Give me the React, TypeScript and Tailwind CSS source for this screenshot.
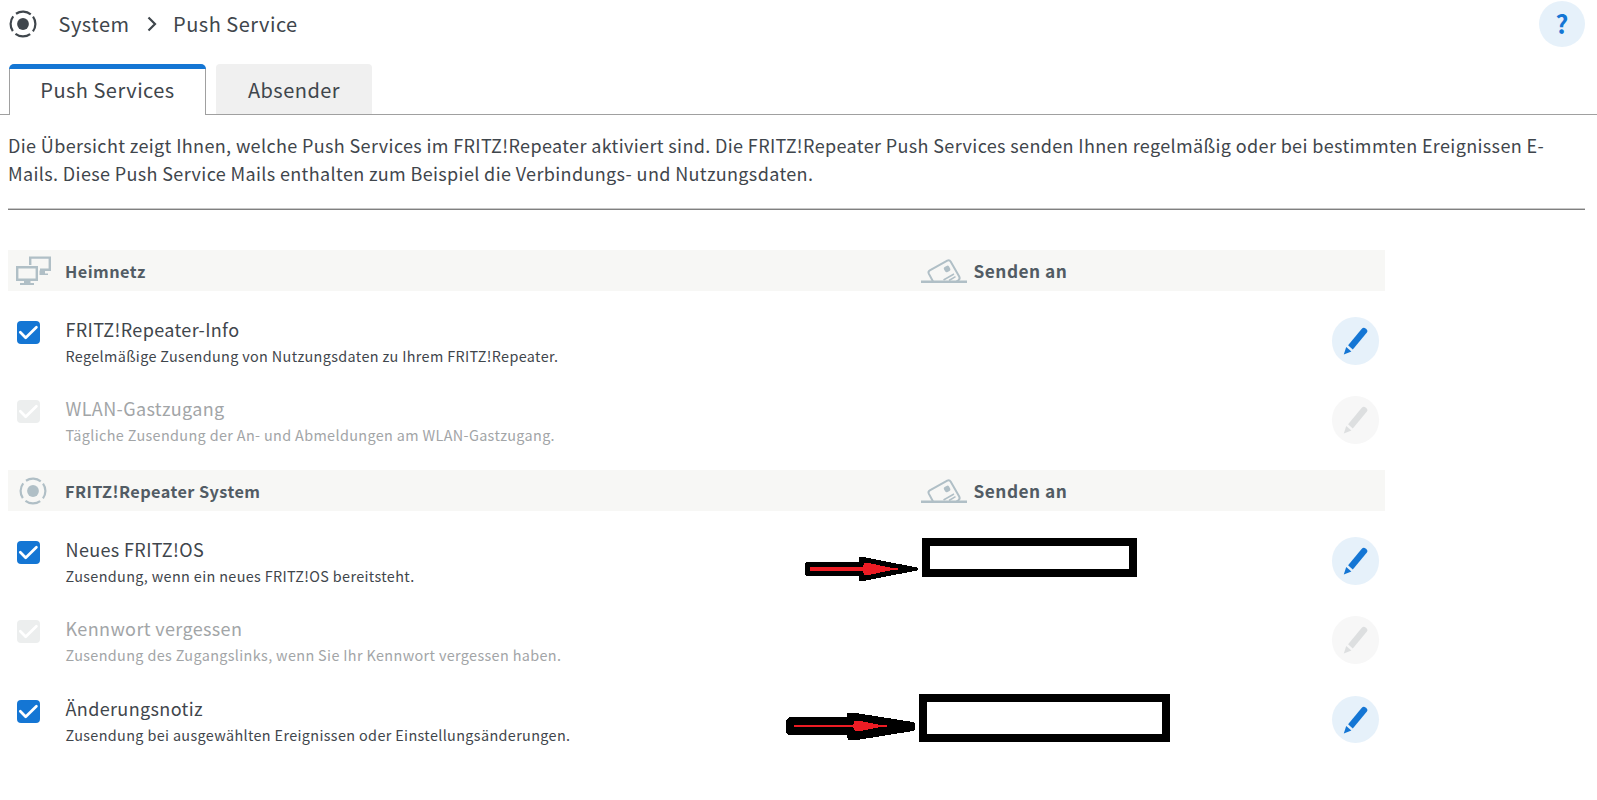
import type { ReactNode } from "react";

type Service = { title: string; info: string; enabled: boolean };

const homeServices: Service[] = [
  { title: "FRITZ!Repeater-Info", info: "Regelmäßige Zusendung von Nutzungsdaten zu Ihrem FRITZ!Repeater.", enabled: true },
  { title: "WLAN-Gastzugang", info: "Tägliche Zusendung der An- und Abmeldungen am WLAN-Gastzugang.", enabled: false },
];

const systemServices: Service[] = [
  { title: "Neues FRITZ!OS", info: "Zusendung, wenn ein neues FRITZ!OS bereitsteht.", enabled: true },
  { title: "Kennwort vergessen", info: "Zusendung des Zugangslinks, wenn Sie Ihr Kennwort vergessen haben.", enabled: false },
  { title: "Änderungsnotiz", info: "Zusendung bei ausgewählten Ereignissen oder Einstellungsänderungen.", enabled: true },
];

function RepeaterIcon({ className }: { className: string }) {
  return (
    <svg viewBox="0 0 28 28" className={className} fill="none">
      <circle cx="14" cy="14" r="5.9" fill="currentColor" />
      <circle cx="14" cy="14" r="12.4" stroke="currentColor" strokeWidth="2.2" strokeDasharray="15.6 3.88" transform="rotate(-36 14 14)" />
    </svg>
  );
}

function MonitorsIcon() {
  return (
    <svg viewBox="0 0 37 32" className="ml-2 h-8 w-[37px] text-[#b0bfc6]" fill="none">
      <path d="M14.2 10V2.6h19.6v12.2H24" stroke="currentColor" strokeWidth="2.4" />
      <path d="M23.5 15.5h5.5v3h3v1.6h-8.5z" fill="currentColor" />
      <path d="M1.2 12.2h19.6v12.6H1.2z" fill="#f7f7f5" stroke="currentColor" strokeWidth="2.4" />
      <path d="M8 25h6.5v3H18v2H4v-2h4z" fill="currentColor" />
    </svg>
  );
}

function LetterIcon() {
  return (
    <svg viewBox="0 0 46 26" className="h-[26px] w-[46px] text-[#b0bfc6]" fill="none" stroke="currentColor">
      <path d="M12 23.5 7.8 15.6Q6.8 13.6 8.8 12.4L26.3 2.6Q28.4 1.5 29.6 3.5L38.2 18.4Q39.4 20.8 37.4 22.2L35.5 23.5" strokeWidth="2" />
      <rect x="23.2" y="8.1" width="5.8" height="5.8" rx="1.8" fill="currentColor" stroke="none" transform="rotate(-30 26 11)" />
      <path d="m22.5 22 10.5-6M28 22.5l6.5-3.8" strokeWidth="1.5" />
      <path d="M0 23.8h46" strokeWidth="2.5" />
    </svg>
  );
}

function EditButton({ enabled }: { enabled: boolean }) {
  return (
    <button
      aria-label="Bearbeiten"
      className={`mt-[6px] ml-auto mr-[6px] size-[47.5px] rounded-full ${enabled ? "bg-[#e6f1fa] text-[#1476d4]" : "bg-[#f7f7f7] text-[#dddfe0]"}`}
    >
      <svg viewBox="0 0 47.5 47.5" className="size-full" fill="currentColor">
        <path d="M16.1 28.3 29.6 12Q31.4 10 33.6 11.4Q36.4 13.2 34.9 15.4L20.8 32.6Z" />
        <path d="m14.2 30 5.2 4.4L11.8 37.6Z" />
      </svg>
    </button>
  );
}

function Checkbox({ enabled }: { enabled: boolean }) {
  return (
    <span className={`mt-[10px] ml-[9px] flex size-[23px] rounded-[4px] ${enabled ? "bg-[#1476d4]" : "bg-[#eceeee]"}`}>
      <svg viewBox="0 0 23 23" className="size-full" fill="none" stroke="white" strokeWidth="2.7">
        <path d="m3.3 11.3 5.4 5.5L19.4 6.2" strokeLinecap="round" strokeLinejoin="round" />
      </svg>
    </span>
  );
}

function ServiceRow({ title, info, enabled }: Service) {
  return (
    <div className={`flex items-start ${enabled ? "h-[79.6px] pt-[10px] text-[#3f464c]" : "h-[79.4px] pt-[9.5px] text-[#a2a5a7]"}`}>
      <div className="w-[57.5px]">
        <Checkbox enabled={enabled} />
      </div>
      <div className="pt-[3.7px]">
        <div className="text-[18px] leading-[28px]">{title}</div>
        <div className="mt-[1.2px] text-[14.4px] leading-6 tracking-[0.36px]">{info}</div>
      </div>
      <EditButton enabled={enabled} />
    </div>
  );
}

function Section({ icon, name, services, listClass }: { icon: ReactNode; name: string; services: Service[]; listClass: string }) {
  return (
    <section className="h-[220px]">
      <header className="flex h-[41px] items-center bg-[#f7f7f5] font-bold text-[#525c64]">
        <div className="w-[57px]">{icon}</div>
        <div className="w-[856px] pt-[2px] text-[16.3px] tracking-[0.43px]">{name}</div>
        <LetterIcon />
        <div className="ml-[6.5px] text-[17.3px] tracking-[0.5px]">Senden an</div>
      </header>
      <div className={listClass}>
        {services.map((s) => (
          <ServiceRow key={s.title} {...s} />
        ))}
      </div>
    </section>
  );
}

export default function App() {
  return (
    <div className="relative h-[800px] w-full overflow-hidden bg-white font-['Noto_Sans_CJK_SC',sans-serif] tracking-[0.365px] text-[#3f464c]">
      <nav className="flex h-[47px] items-center pl-[9px] text-[20px] tracking-[0.48px]">
        <RepeaterIcon className="size-7" />
        <span className="ml-[21.5px]">System</span>
        <svg viewBox="0 0 10 16" className="ml-[17.4px] h-4 w-[10px]" fill="none" stroke="currentColor" strokeWidth="2.2">
          <path d="m1.5 1.5 6.5 6.5-6.5 6.5" />
        </svg>
        <span className="ml-[16.2px]">Push Service</span>
        <button aria-label="Hilfe" className="mr-3 ml-auto size-[46px] rounded-full bg-[#e6f1fa] text-[25px] leading-[45px] font-bold tracking-normal text-[#1476d4]">
          ?
        </button>
      </nav>

      <div className="mt-[17px] flex h-[51px] text-center text-[20px] leading-[52px] tracking-[0.48px]">
        <div className="w-[9px] border-b border-[#a0a0a0]" />
        <div className="flex w-[197px] flex-col overflow-hidden rounded-t-[5px]">
          <div className="h-[5px] shrink-0 bg-[#1476d4]" />
          <div className="h-[46px] border-x border-[#a0a0a0] leading-[42px]">Push Services</div>
        </div>
        <div className="w-[10px] border-b border-[#a0a0a0]" />
        <div className="w-[156px] rounded-t-[4px] border-b border-[#a0a0a0] bg-[#f0f0f0]">Absender</div>
        <div className="flex-1 border-b border-[#a0a0a0]" />
      </div>

      <main className="pt-4 pl-2">
        <p className="h-14 text-[18px] leading-[28px]">
          Die Übersicht zeigt Ihnen, welche Push Services im FRITZ!Repeater aktiviert sind. Die FRITZ!Repeater Push Services senden Ihnen regelmäßig oder bei bestimmten Ereignissen E-
          <br />
          Mails. Diese Push Service Mails enthalten zum Beispiel die Verbindungs- und Nutzungsdaten.
        </p>
        <div className="mt-[21px] mr-3 h-[2px] border-t border-b border-t-[#c8c8c8] border-b-[#808080]" />

        <div className="mt-[40px] w-[1377px]">
          <Section icon={<MonitorsIcon />} name="Heimnetz" services={homeServices} listClass="pt-[10.3px]" />
          <Section icon={<RepeaterIcon className="ml-[11px] size-7 text-[#b0bfc6]" />} name="FRITZ!Repeater System" services={systemServices} listClass="pt-[10px]" />
        </div>
      </main>

      <div className="absolute top-[538px] left-[922px] h-[39px] w-[215px] border-8 border-black bg-white" />
      <div className="absolute top-[694px] left-[919px] h-[48px] w-[251px] border-8 border-black bg-white" />
      <svg viewBox="0 0 113 24" className="absolute top-[557px] left-[805px] h-6 w-[113px]" shapeRendering="crispEdges">
        <path d="M1 5H54V0H58L112 10.5 113 12 112 13.5 58 24H54V19H1L0 18V6Z" fill="#000" />
        <path d="M5 10H58L59 6H64L87 11H93V13H87L64 18H59L58 14H5Z" fill="#ed1c24" />
      </svg>
      <svg viewBox="0 0 129 27" className="absolute top-[713px] left-[786px] h-[27px] w-[129px]" shapeRendering="crispEdges">
        <path d="M3 4H61V0H70L127 9 129 11V16L127 18 71 27H62L61 22H2L0 19V7Z" fill="#000" />
        <path d="M8 12H65L68 11V8H74L94 12H101V14H94L74 18H69L68 15 65 14H8Z" fill="#ed1c24" />
      </svg>
    </div>
  );
}
